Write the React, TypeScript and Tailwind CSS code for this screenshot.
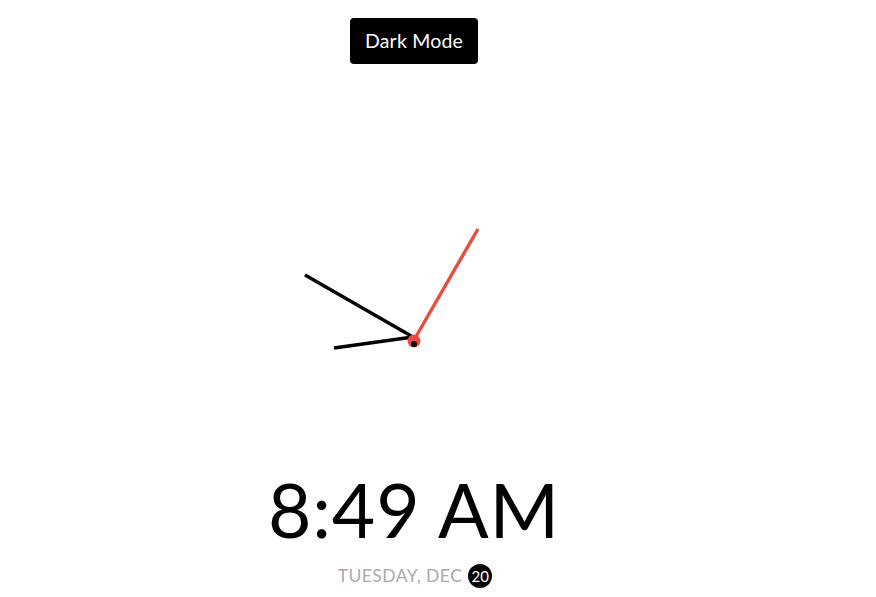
import React from "react";

export default function App() {
  return (
    <div className="w-[876px] h-[597px] bg-white overflow-hidden" style={{ fontFamily: "Lato, 'Open Sans', sans-serif" }}>
      <div className="w-[828px] flex flex-col items-center">
        <button className="mt-[18px] h-[46px] px-[15px] bg-black text-white rounded-[4px] text-[19.5px] leading-[24px] tracking-[0.2px]">
          Dark Mode
        </button>
        <svg className="mt-[148px]" width="250" height="250" viewBox="0 0 250 250">
          <line x1="124" y1="125" x2="16" y2="63" stroke="#000" strokeWidth="3.4" />
          <line x1="124" y1="125" x2="45" y2="136" stroke="#000" strokeWidth="3.4" />
          <line x1="125" y1="128" x2="189" y2="17" stroke="#e74c3c" strokeWidth="3.4" />
          <circle cx="125" cy="129" r="6.5" fill="#e74c3c" />
          <circle cx="125" cy="132" r="3" fill="#000" />
        </svg>
        <div className="mt-[2px] text-[75px] leading-[90px] text-black tracking-[0.8px]">8:49 AM</div>
        <div className="mt-[10px] h-[24px] flex items-center text-[17.5px] text-[#aaaaaa] uppercase tracking-[0.45px] pl-[2px]">
          <span>Tuesday, Dec</span>
          <span className="ml-[6px] w-[24px] h-[24px] rounded-full bg-black text-white text-[15px] leading-[24px] flex items-center justify-center tracking-normal">
            20
          </span>
        </div>
      </div>
    </div>
  );
}
